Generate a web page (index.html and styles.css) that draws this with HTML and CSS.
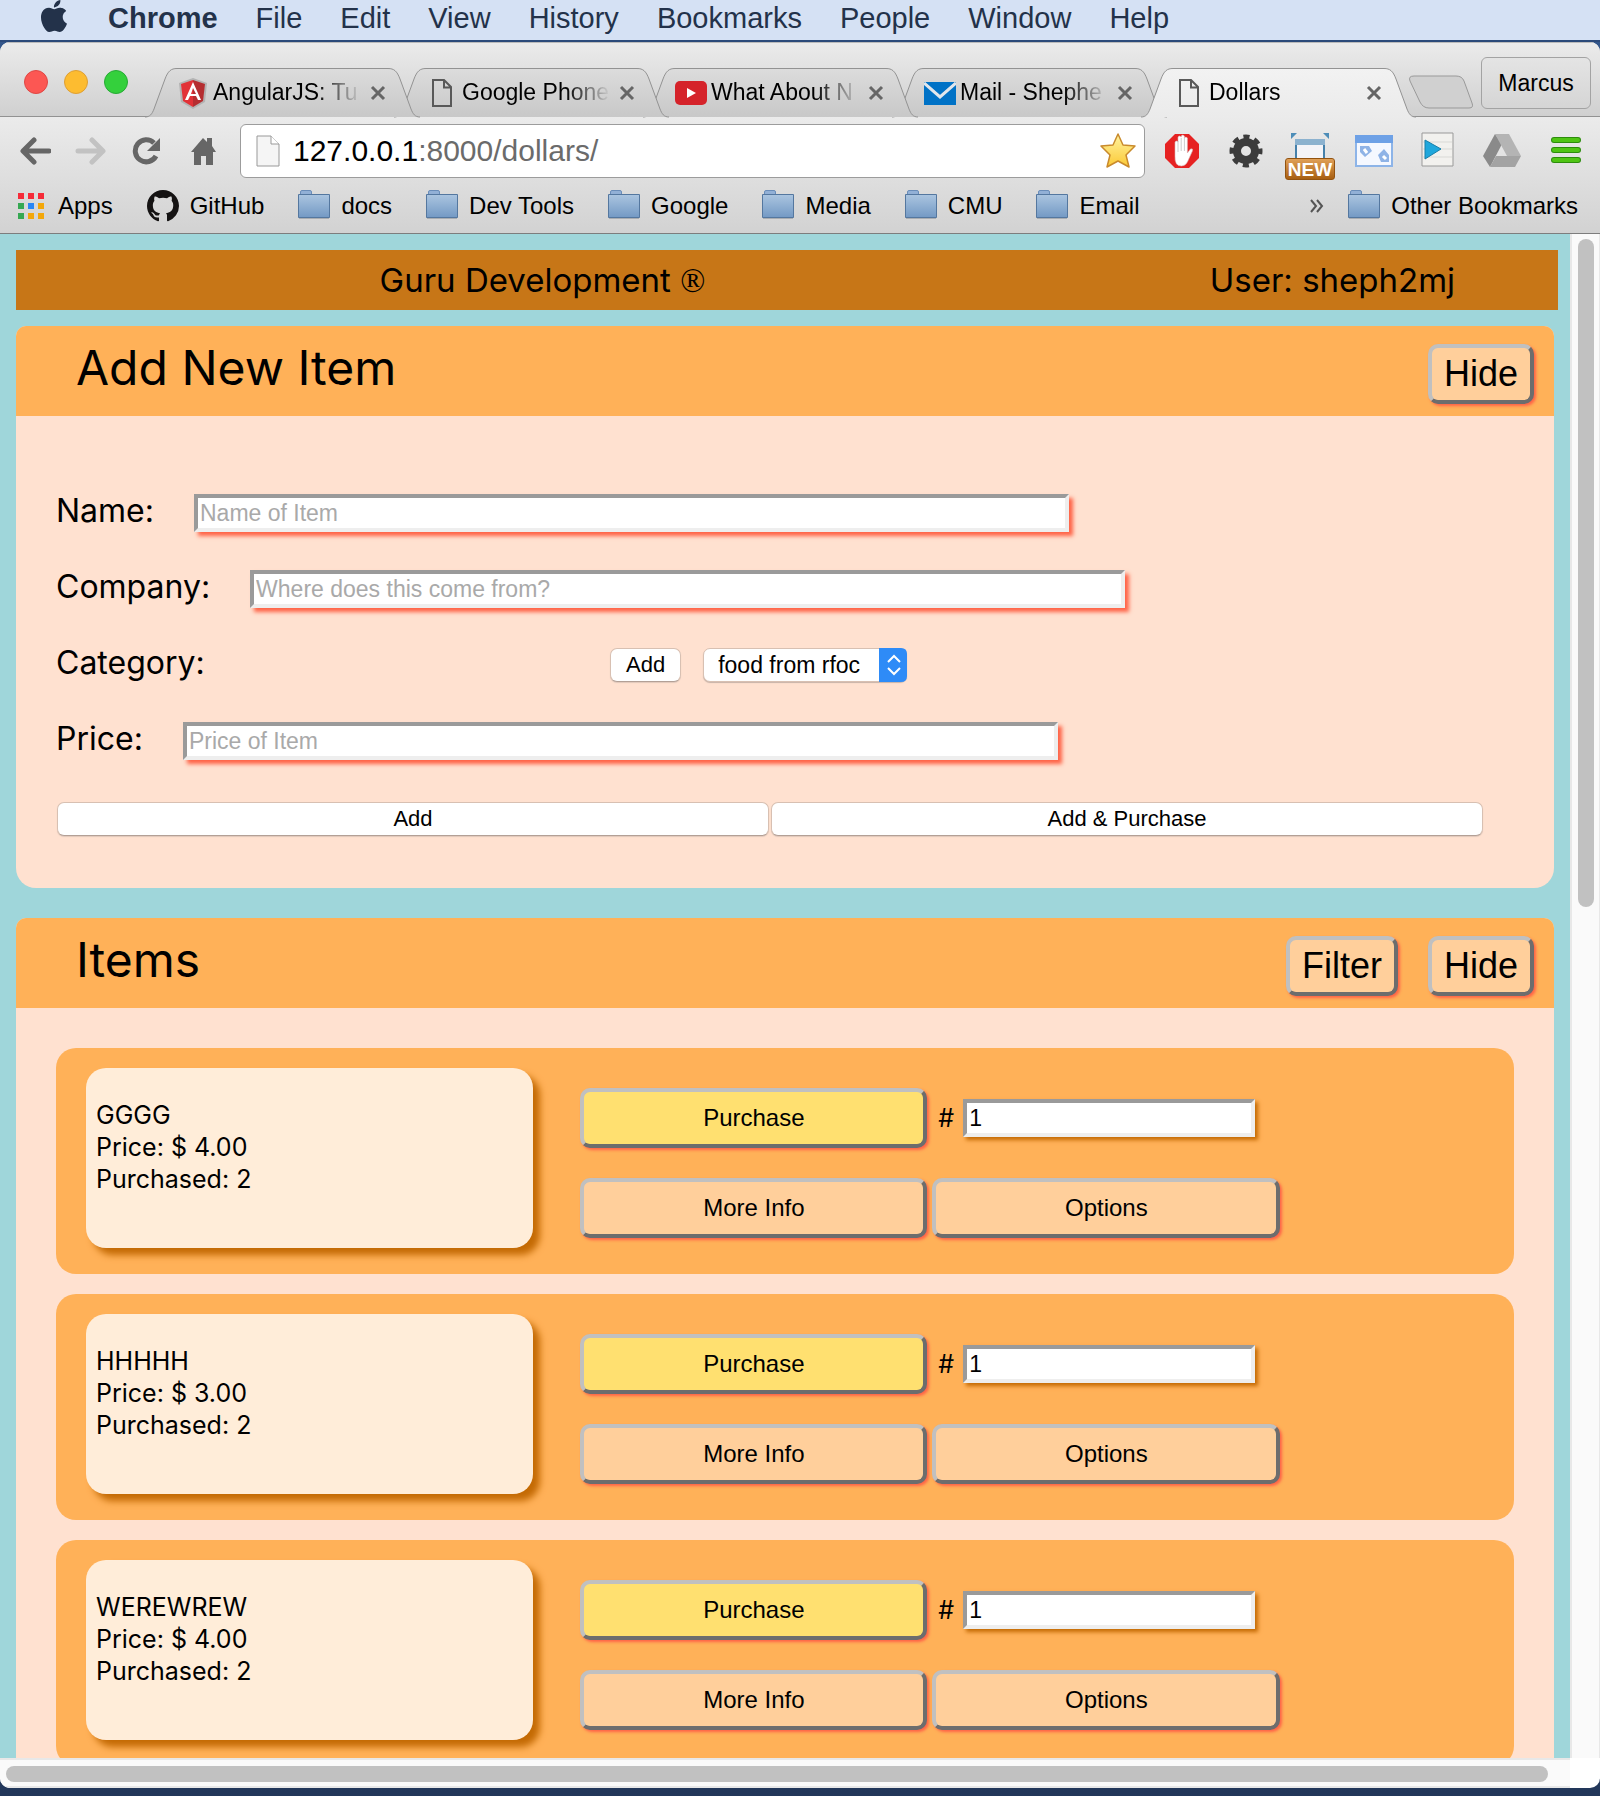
FILE: index.html
```html
<!DOCTYPE html>
<html lang="en">
<head>
<meta charset="utf-8">
<title>Dollars</title>
<link rel="stylesheet" href="styles.css">
</head>
<body>
<svg class="defs" aria-hidden="true">
  <defs>
    <linearGradient id="g-folder" x1="0" y1="0" x2="0" y2="1"><stop offset="0" stop-color="#abc5e0"/><stop offset="1" stop-color="#7399c4"/></linearGradient>
    <linearGradient id="g-tab" x1="0" y1="0" x2="0" y2="1"><stop offset="0" stop-color="#dcdcdc"/><stop offset="1" stop-color="#c8c8c8"/></linearGradient>
    <linearGradient id="g-tab-on" x1="0" y1="0" x2="0" y2="1"><stop offset="0" stop-color="#f2f2f2"/><stop offset="1" stop-color="#ebebeb"/></linearGradient>
    <linearGradient id="g-star" x1="0" y1="0" x2="0" y2="1"><stop offset="0" stop-color="#fff3a0"/><stop offset="1" stop-color="#fbc935"/></linearGradient>
    <symbol id="i-folder" viewBox="0 0 32 30"><path d="M2.500 5V2q0-1.500 1.500-1.500h8q1.500 0 1.500 1.500v3z" fill="#92b0d6" stroke="#6a8db9"/><path d="M.5 4.500h31v23H.5z" fill="url(#g-folder)" stroke="#54779f"/><path d="M1 28.500h30" stroke="#a9adb2"/></symbol>
    <symbol id="i-doc" viewBox="0 0 20 28"><path d="M1 1h11l7 7v19H1zM12 1v7.500h7" fill="none" stroke="#595959" stroke-width="2"/></symbol>
    <symbol id="i-close" viewBox="0 0 16 16"><path d="M2 2l12 12M14 2L2 14" stroke="#666" stroke-width="3"/></symbol>
    <symbol id="i-tab" viewBox="0 0 275 50"><path d="M0 49C5 49 7 46 9 41L20 11C23 3 26 .5 32 .5H243C249 .5 252 3 255 11L266 41C268 46 270 49 275 49" stroke="#929292"/></symbol>
  </defs>
</svg>

<nav class="menubar" aria-label="System menu">
  <svg class="apple" viewBox="0 0 24 24" fill="#23324a"><path d="M12.152 6.896c-.948 0-2.415-1.078-3.960-1.040-2.040.027-3.910 1.183-4.961 3.014-2.117 3.675-.546 9.103 1.519 12.090 1.013 1.454 2.208 3.090 3.792 3.039 1.520-.065 2.090-.987 3.935-.987 1.831 0 2.350.987 3.960.948 1.637-.026 2.676-1.480 3.676-2.948 1.156-1.688 1.636-3.325 1.662-3.415-.039-.013-3.182-1.221-3.220-4.857-.026-3.040 2.480-4.494 2.597-4.559-1.429-2.090-3.623-2.324-4.390-2.376-2-.156-3.675 1.090-4.610 1.090zM15.530 3.830c.843-1.012 1.400-2.427 1.245-3.830-1.207.052-2.662.805-3.532 1.818-.78.896-1.454 2.338-1.273 3.714 1.338.104 2.715-.688 3.559-1.701"/></svg>
  <a href="#" class="app-name">Chrome</a><a href="#">File</a><a href="#">Edit</a><a href="#">View</a><a href="#">History</a><a href="#">Bookmarks</a><a href="#">People</a><a href="#">Window</a><a href="#">Help</a>
</nav>

<div class="window">
  <header class="chrome">
    <div class="tabstrip">
      <div class="lights">
        <button class="light light-red" aria-label="Close"></button>
        <button class="light light-yellow" aria-label="Minimize"></button>
        <button class="light light-green" aria-label="Zoom"></button>
      </div>
      <div class="tabs">
        <div class="tab">
          <svg class="tab-shape"><use href="#i-tab" fill="url(#g-tab)"/></svg>
          <svg class="tab-icon" viewBox="0 0 32 32"><path d="M16 1l14 5-2 19-12 7L4 25 2 6z" fill="#b3b3b3"/><path d="M16 3L4 7l2 17 10 6z" fill="#e23237"/><path d="M16 3l12 4-2 17-10 6z" fill="#b52e31"/><path d="M16 5L8 23h3l2-4h6l2 4h3zm0 6l3 6h-5z" fill="#fff"/></svg>
          <span class="tab-title">AngularJS: Tu</span>
          <button class="tab-close" aria-label="Close tab"><svg><use href="#i-close"/></svg></button>
        </div>
        <div class="tab">
          <svg class="tab-shape"><use href="#i-tab" fill="url(#g-tab)"/></svg>
          <svg class="tab-icon"><use href="#i-doc" width="32" height="28" y="2"/></svg>
          <span class="tab-title">Google Phone</span>
          <button class="tab-close" aria-label="Close tab"><svg><use href="#i-close"/></svg></button>
        </div>
        <div class="tab">
          <svg class="tab-shape"><use href="#i-tab" fill="url(#g-tab)"/></svg>
          <svg class="tab-icon" viewBox="0 0 32 32"><rect y="4" width="32" height="24" rx="5" fill="#d5232a"/><path d="M12 11l9 5-9 5z" fill="#fff"/></svg>
          <span class="tab-title">What About N</span>
          <button class="tab-close" aria-label="Close tab"><svg><use href="#i-close"/></svg></button>
        </div>
        <div class="tab">
          <svg class="tab-shape"><use href="#i-tab" fill="url(#g-tab)"/></svg>
          <svg class="tab-icon" viewBox="0 0 32 32"><path d="M0 5h32v23H0z" fill="#0072c6"/><path d="M0 6l16 14L32 6" fill="none" stroke="#e0e6ec" stroke-width="3"/><path d="M2 5h28L16 17z" fill="#0072c6"/></svg>
          <span class="tab-title">Mail - Shephe</span>
          <button class="tab-close" aria-label="Close tab"><svg><use href="#i-close"/></svg></button>
        </div>
        <div class="tab tab-active">
          <svg class="tab-shape"><use href="#i-tab" fill="url(#g-tab-on)"/></svg>
          <svg class="tab-icon"><use href="#i-doc" width="32" height="28" y="2"/></svg>
          <span class="tab-title">Dollars</span>
          <button class="tab-close" aria-label="Close tab"><svg><use href="#i-close"/></svg></button>
        </div>
      </div>
      <button class="new-tab" aria-label="New tab"><svg viewBox="0 0 66 34"><path d="M6 1h42q6 0 8 5l8 22q2 5-3 5H21q-6 0-9-6L2 6Q0 1 6 1z" fill="#d0d0d0" stroke="#999"/></svg></button>
      <button class="profile">Marcus</button>
    </div>

    <div class="toolbar">
      <div class="nav-buttons">
        <button aria-label="Back"><svg viewBox="0 0 32 28"><path d="M15 3L4 14l11 11M5 14h25" fill="none" stroke="#666" stroke-width="5" stroke-linejoin="round" stroke-linecap="round"/></svg></button>
        <button aria-label="Forward"><svg viewBox="0 0 32 28"><path d="M17 3l11 11-11 11M27 14H3" fill="none" stroke="#c2c2c2" stroke-width="5" stroke-linejoin="round" stroke-linecap="round"/></svg></button>
        <button aria-label="Reload"><svg viewBox="0 0 32 28"><path d="M25 19A11 11 0 1 1 23 6" fill="none" stroke="#666" stroke-width="5"/><path d="M29 1v13H16z" fill="#666"/></svg></button>
        <button aria-label="Home"><svg viewBox="0 0 32 28"><path d="M16 1l4 4V1h5v8l4 6h-3v13h-7v-9h-5v9H7V15H4z" fill="#666"/></svg></button>
      </div>
      <div class="omnibox">
        <svg class="page-icon" viewBox="0 0 24 32"><path d="M1 1h14l8 8v22H1z" fill="#f5f5f5" stroke="#999"/><path d="M15 1v8h8" fill="#fff" stroke="#999"/></svg>
        <span class="url"><b>127.0.0.1</b>:8000/dollars/</span>
        <button class="star" aria-label="Bookmark this page"><svg viewBox="0 0 36 36"><path d="M18 1l5 11 12 1-9 9 3 12-11-6-11 6 3-12-9-9 12-1z" fill="url(#g-star)" stroke="#c98a2c" stroke-width="1.500" stroke-linejoin="round"/></svg></button>
      </div>
      <div class="extensions">
        <button aria-label="Ad blocker"><svg viewBox="0 0 48 48"><path d="M17 7h14l10 10v14L31 41H17L7 31V17z" fill="#e62222"/><path d="M17 29V15q1.500-2 3 0v-5q1.500-2 3.200 0V9q1.500-2 3.200 0v2q1.500-2 3 0v15l3-4q3-1 2 2l-5 11q-2 4-6 4-7 0-6.400-10z" fill="#fff" stroke="#d9b5b5" stroke-width=".6"/><path d="M20 14v11M23.200 11v13M26.400 11v13" stroke="#ccc"/></svg></button>
        <button aria-label="Settings"><svg viewBox="0 0 48 48"><circle cx="24" cy="24" r="9" fill="none" stroke="#3c3c3c" stroke-width="8"/><circle cx="24" cy="24" r="14" fill="none" stroke="#3c3c3c" stroke-width="5" stroke-dasharray="6 5" stroke-dashoffset="3"/></svg></button>
        <button class="ext-new" aria-label="Window resizer"><svg viewBox="0 0 48 48"><path d="M5 6h6l-6 6zM43 6h-6l6 6z" fill="#4d8db8"/><path d="M10 16h28v26H10z" fill="#f4f4f8" stroke="#4580aa" stroke-width="2"/><path d="M9 12h30v6H9z" fill="#8cb2cf"/></svg><span>NEW</span></button>
        <button aria-label="Gadgets"><svg viewBox="0 0 48 48"><path d="M6 9h36v30H6z" fill="#f5f8ff" stroke="#8db4e8" stroke-width="2"/><path d="M5 8h38v8H5z" fill="#6ea1e6"/><path d="M10 19h9l3 5-7 6-5-5zM28 28l6-6 5 6v7h-8z" fill="#8fb3e6"/><path d="M14 22l3 4M33 29l3 3" stroke="#fff" stroke-width="3"/></svg></button>
        <button aria-label="Player"><svg viewBox="0 0 48 48"><path d="M8 6h31v33H8z" fill="#f2f1ee" stroke="#999"/><path d="M9 15h29M9 22h29M9 30h29" stroke="#d9d9d6"/><path d="M11 13l16 9-16 10z" fill="#1fa7dc" stroke="#177fa9"/></svg></button>
        <button aria-label="Drive"><svg viewBox="0 0 48 48"><path d="M17 7l7 10L12 40 5 29z" fill="#8a8a8a"/><path d="M17 7h14l12 22H29z" fill="#b4b4b4"/><path d="M18 29h25l-6 11H12z" fill="#a3a3a3"/></svg></button>
        <button aria-label="Menu"><svg viewBox="0 0 48 48"><path d="M12 13h24M12 23h24M12 33h24" stroke="#2c8d0c" stroke-width="6" stroke-linecap="round"/><path d="M12 13h24M12 23h24M12 33h24" stroke="#4fc414" stroke-width="4" stroke-linecap="round"/></svg></button>
      </div>
    </div>

    <nav class="bookmarks" aria-label="Bookmarks">
      <a href="#"><svg class="bm-apps" viewBox="0 0 27 27"><path d="M0 0h6v6H0zM10 0h6v6h-6zM20 0h6v6h-6z" fill="#f52b38"/><path d="M0 10h6v6H0zM0 20h6v6H0z" fill="#35a852"/><path d="M10 10h6v6h-6z" fill="#2a86f5"/><path d="M20 10h6v6h-6zM10 20h6v6h-6zM20 20h6v6h-6z" fill="#f3a70a"/></svg>Apps</a>
      <a href="#"><svg class="bm-icon bm-hub" viewBox="0 0 16 16" fill="#151313"><path d="M8 0C3.580 0 0 3.580 0 8c0 3.540 2.290 6.530 5.470 7.590.4.070.55-.17.55-.38 0-.19-.01-.82-.01-1.490-2.010.37-2.530-.49-2.690-.94-.09-.23-.48-.94-.82-1.130-.28-.15-.68-.52-.01-.53.630-.01 1.080.58 1.230.82.720 1.210 1.870.87 2.330.66.070-.52.280-.87.510-1.070-1.780-.2-3.640-.89-3.640-3.950 0-.87.310-1.590.82-2.150-.08-.2-.36-1.020.08-2.120 0 0 .67-.21 2.200.82.640-.18 1.320-.27 2-.27s1.360.09 2 .27c1.530-1.040 2.200-.82 2.200-.82.440 1.100.160 1.920.080 2.120.510.56.820 1.270.820 2.150 0 3.070-1.870 3.750-3.650 3.950.290.25.540.73.540 1.480 0 1.070-.01 1.930-.01 2.200 0 .21.150.46.550.38A8.010 8.010 0 0 0 16 8c0-4.420-3.580-8-8-8z"/></svg>GitHub</a>
      <a href="#"><svg class="bm-icon"><use href="#i-folder"/></svg>docs</a>
      <a href="#"><svg class="bm-icon"><use href="#i-folder"/></svg>Dev Tools</a>
      <a href="#"><svg class="bm-icon"><use href="#i-folder"/></svg>Google</a>
      <a href="#"><svg class="bm-icon"><use href="#i-folder"/></svg>Media</a>
      <a href="#"><svg class="bm-icon"><use href="#i-folder"/></svg>CMU</a>
      <a href="#"><svg class="bm-icon"><use href="#i-folder"/></svg>Email</a>
      <button class="bm-more" aria-label="More bookmarks"><svg viewBox="0 0 14 14"><path d="M1 1l5 6-5 6M7 1l5 6-5 6" fill="none" stroke="#555" stroke-width="2"/></svg></button>
      <a href="#"><svg class="bm-icon"><use href="#i-folder"/></svg>Other Bookmarks</a>
    </nav>
  </header>

  <div class="viewport">
    <main class="page">
      <div class="site-header"><span>Guru Development <span class="reg">®</span></span><span>User: sheph2mj</span></div>

      <section class="panel">
        <div class="panel-head"><h1>Add New Item</h1><button class="raised">Hide</button></div>
        <form class="panel-body add-form">
          <div class="field"><label for="name">Name:</label><input class="text" id="name" type="text" placeholder="Name of Item"></div>
          <div class="field"><label for="company">Company:</label><input class="text" id="company" type="text" placeholder="Where does this come from?"></div>
          <div class="field field-category"><label for="category">Category:</label><button type="button" class="native">Add</button>
            <span class="select"><select id="category"><option>food from rfoc</option></select><svg viewBox="0 0 28 34"><path d="M0 0h22q6 0 6 6v22q0 6-6 6H0z" fill="#2e8bf7"/><path d="M9 14l6-6 6 6M9 20l6 6 6-6" fill="none" stroke="#fff" stroke-width="2"/></svg></span></div>
          <div class="field"><label for="price">Price:</label><input class="text" id="price" type="text" placeholder="Price of Item"></div>
          <div class="submit"><button type="button" class="native">Add</button><button type="button" class="native">Add &amp; Purchase</button></div>
        </form>
      </section>

      <section class="panel">
        <div class="panel-head"><h1>Items</h1><button class="raised">Filter</button><button class="raised">Hide</button></div>
        <div class="panel-body items">
          <article class="item">
            <div class="card"><p>GGGG</p><p>Price: $ 4.00</p><p>Purchased: 2</p></div>
            <div class="actions">
              <button class="raised buy">Purchase</button><div class="count"><label for="n1">#</label><input class="text" id="n1" type="text" value="1"></div>
              <button class="raised">More Info</button><button class="raised">Options</button>
            </div>
          </article>
          <article class="item">
            <div class="card"><p>HHHHH</p><p>Price: $ 3.00</p><p>Purchased: 2</p></div>
            <div class="actions">
              <button class="raised buy">Purchase</button><div class="count"><label for="n2">#</label><input class="text" id="n2" type="text" value="1"></div>
              <button class="raised">More Info</button><button class="raised">Options</button>
            </div>
          </article>
          <article class="item">
            <div class="card"><p>WEREWREW</p><p>Price: $ 4.00</p><p>Purchased: 2</p></div>
            <div class="actions">
              <button class="raised buy">Purchase</button><div class="count"><label for="n3">#</label><input class="text" id="n3" type="text" value="1"></div>
              <button class="raised">More Info</button><button class="raised">Options</button>
            </div>
          </article>
        </div>
      </section>
    </main>
    <div class="scroll scroll-y"><div class="thumb"></div></div>
    <div class="scroll scroll-x"><div class="thumb"></div></div>
    <div class="corner"></div>
  </div>
</div>
</body>
</html>
```
FILE: styles.css
```css
* { box-sizing: border-box; }

body {
  margin: 0;
  height: 100vh;
  display: flex;
  flex-direction: column;
  overflow: hidden;
  background: linear-gradient(#34578c, #22375a);
  font-family: "Liberation Sans", Arial, sans-serif;
  color: #000;
}

button {
  margin: 0;
  padding: 0;
  border: 0;
  background: none;
  font-family: inherit;
  color: inherit;
}
button svg { display: block; }
a { color: inherit; text-decoration: none; }
.defs { position: absolute; width: 0; height: 0; }

/* System menu bar */
.menubar {
  display: flex;
  align-items: center;
  gap: 38px;
  height: 42px;
  padding: 0 38px 4px;
  background: #d5e1f4;
  border-bottom: 2px solid #2b4a7a;
  font-size: 29px;
  line-height: 36px;
  color: #23324a;
}
.apple { width: 32px; height: 32px; margin-bottom: 4px; }
.app-name { font-weight: bold; }

/* Browser window */
.window {
  flex: 1;
  min-height: 0;
  display: flex;
  flex-direction: column;
  margin-bottom: 8px;
  border-radius: 10px;
  overflow: hidden;
  background: #fff;
}
.chrome { border-bottom: 1px solid #7d7d7d; background: #d6d6d6; }

.tabstrip {
  display: flex;
  align-items: flex-end;
  height: 75px;
  padding-right: 9px;
  border-top: 1px solid #bbb;
  border-bottom: 1px solid #929292;
  background: linear-gradient(#ebebeb, #d0d0d0);
}
.lights { display: flex; gap: 16px; padding: 0 17px 22px 24px; }
.light { width: 24px; height: 24px; border-radius: 50%; }
.light-red { background: #fc5753; border: 1px solid #df4744; }
.light-yellow { background: #fdbc30; border: 1px solid #de9f34; }
.light-green { background: #34d03c; border: 1px solid #27aa35; }

.tabs { display: flex; margin-bottom: -1px; }
.tab {
  position: relative;
  display: flex;
  align-items: center;
  flex: 0 1 275px;
  width: 275px;
  height: 49px;
  padding-left: 32px;
  font-size: 23px;
}
.tab + .tab { margin-left: -26px; }
.tab:nth-child(1) { z-index: 4; }
.tab:nth-child(2) { z-index: 3; }
.tab:nth-child(3) { z-index: 2; }
.tab:nth-child(4) { z-index: 1; }
.tab-active { z-index: 5; }
.tab-shape { position: absolute; inset: 0; z-index: -1; width: 275px; height: 50px; }
.tab-icon { flex: none; width: 32px; height: 32px; }
.tab-title {
  width: 148px;
  margin: 0 9px 2px 4px;
  white-space: nowrap;
  line-height: 30px;
  -webkit-mask-image: linear-gradient(90deg, #000 70%, transparent);
  mask-image: linear-gradient(90deg, #000 70%, transparent);
}
.tab-close svg { width: 16px; height: 16px; }

.new-tab { margin: 0 0 7px -8px; }
.new-tab svg { width: 66px; height: 34px; }
.profile {
  height: 52px;
  width: 110px;
  margin: 0 0 7px auto;
  border: 1px solid #a3a3a3;
  border-radius: 6px;
  background: linear-gradient(#e4e4e4, #d5d5d5);
  font-size: 23px;
}

.toolbar {
  display: flex;
  align-items: center;
  padding: 7px 10px 1px 19px;
  background: linear-gradient(#ebebeb, #dedede);
}
.nav-buttons { display: flex; gap: 24px; padding-right: 21px; }
.nav-buttons svg { width: 32px; height: 28px; }
.omnibox {
  flex: 1;
  display: flex;
  align-items: center;
  height: 54px;
  padding: 0 8px 0 15px;
  border: 1px solid #9c9c9c;
  border-radius: 6px;
  background: #fff;
}
.page-icon { width: 24px; height: 32px; }
.url { flex: 1; margin-left: 13px; font-size: 30px; line-height: 40px; color: #6b6b6b; }
.url b { font-weight: normal; color: #000; }
.star svg { width: 36px; height: 36px; }
.extensions { display: flex; gap: 16px; padding-left: 13px; }
.extensions svg { width: 48px; height: 48px; }
.ext-new { position: relative; }
.ext-new span {
  position: absolute;
  left: -1px;
  bottom: -5px;
  width: 50px;
  height: 22px;
  border: 1px solid #935310;
  border-radius: 3px;
  background: linear-gradient(#e0a058, #a85f12);
  color: #fff;
  font-size: 19px;
  font-weight: bold;
  line-height: 21px;
}

.bookmarks {
  display: flex;
  align-items: center;
  gap: 34px;
  height: 54px;
  padding: 0 22px 0 18px;
  background: linear-gradient(#dedede, #d2d2d2);
  font-size: 24px;
}
.bookmarks a { display: flex; align-items: center; gap: 11px; line-height: 32px; white-space: nowrap; }
.bm-apps { width: 27px; height: 27px; margin-right: 2px; }
.bm-icon { width: 32px; height: 30px; margin-bottom: 3px; }
.bm-hub { height: 32px; margin: 0; }
.bm-more { margin-left: auto; margin-right: -10px; }
.bm-more svg { width: 14px; height: 14px; }

/* Page area and its scroll bars */
.viewport {
  flex: 1;
  min-height: 0;
  display: grid;
  grid-template: minmax(0, 1fr) 30px / minmax(0, 1fr) 30px;
}
.page {
  overflow: hidden;
  padding: 16px 12px 0 16px;
  background: #9fd6da;
  font-family: Inter, sans-serif;
}
.scroll { background: #fafafa; border: 0 solid #e8e8e8; }
.scroll-y { grid-area: 1 / 2; border-width: 0 1px 0 2px; padding: 5px 5px 0 6px; }
.scroll-x { grid-area: 2 / 1; border-width: 2px 0; padding: 6px 22px 0 6px; }
.thumb { border-radius: 8px; background: #c1c1c1; }
.scroll-y .thumb { height: 44%; }
.scroll-x .thumb { height: 16px; }

.site-header {
  display: grid;
  grid-template-columns: 7fr 3fr;
  column-gap: 38px;
  align-items: center;
  height: 60px;
  background: #c77617;
  font-size: 33px;
  text-align: center;
}
.reg { font-family: "Liberation Serif", serif; }

.panel { margin: 16px 4px 30px 0; border-radius: 10px 10px 20px 20px; background: #ffe1d0; }
.panel-head {
  display: flex;
  align-items: center;
  gap: 30px;
  height: 90px;
  padding: 6px 20px 0 60px;
  border-radius: 10px 10px 0 0;
  background: #ffb158;
}
h1 { flex: 1; margin: 0 0 12px; font-size: 48px; font-weight: normal; line-height: 56px; }
.panel-body { padding: 40px; }

.raised {
  height: 60px;
  padding: 0 14px;
  border: 4px solid;
  border-color: #c0c0c0 #6d6d6d #6d6d6d #c0c0c0;
  border-radius: 10px;
  background: #ffcf9b;
  box-shadow: 2px 2px 3px #ff6347;
  font-family: "Liberation Sans", Arial, sans-serif;
  font-size: 24px;
}
.panel-head .raised { padding: 0 12px; font-size: 36px; }

.text {
  height: 38px;
  padding: 2px;
  border: 4px solid;
  border-color: #9a9a9a #eee #eee #9a9a9a;
  border-radius: 0;
  background: #fff;
  box-shadow: 4px 4px 4px #ff6347;
  font-family: "Liberation Sans", Arial, sans-serif;
  font-size: 23px;
}
.text::placeholder { color: #a9a9a9; }

.add-form { padding: 78px 40px 52px; }
.field { display: flex; align-items: center; height: 38px; margin-bottom: 38px; font-size: 32px; }
.field label { margin: 0 40px 6px 0; }
.field .text { width: 60%; }
.field-category label { flex: 0 0 38%; margin-right: 0; }
.native {
  height: 34px;
  padding: 0 15px;
  border: 1px solid #d8c0b2;
  border-bottom-color: #b3a096;
  border-radius: 7px;
  background: #fff;
  box-shadow: 0 1px 1px #e0c8bb;
  font-size: 22px;
  font-family: "Liberation Sans", Arial, sans-serif;
}
.select { position: relative; margin-left: 22px; }
.select select {
  display: block;
  appearance: none;
  width: 204px;
  height: 34px;
  padding: 0 14px;
  border: 1px solid #d8c0b2;
  border-radius: 7px;
  background: #fff;
  box-shadow: 0 1px 1px #c8b3a8;
  color: #000;
  font-family: "Liberation Sans", Arial, sans-serif;
  font-size: 23px;
}
.select svg { position: absolute; right: 0; top: 0; width: 28px; height: 34px; pointer-events: none; }
.submit { display: grid; grid-template-columns: 1fr 1fr; gap: 2px; padding: 4px 31px 0 1px; }

.item {
  display: flex;
  gap: 47px;
  margin-bottom: 20px;
  padding: 20px 30px 26px;
  border-radius: 20px;
  background: #ffb158;
}
.card {
  flex: 0 0 32%;
  height: 180px;
  padding: 31px 10px;
  border-radius: 20px;
  background: #ffedd9;
  box-shadow: 7px 7px 7px #c46a04;
  font-size: 25px;
  line-height: 32px;
}
.card p { margin: 0; }
.actions {
  display: grid;
  grid-template-columns: 347px 348px;
  gap: 30px 5px;
  align-content: start;
  padding-top: 20px;
}
.buy { background: #ffe070; }
.count { display: flex; align-items: center; gap: 9px; padding-left: 6px; font-size: 25px; }
.count .text { width: 292px; box-shadow: 3px 3px 4px #c46a04; }
```
